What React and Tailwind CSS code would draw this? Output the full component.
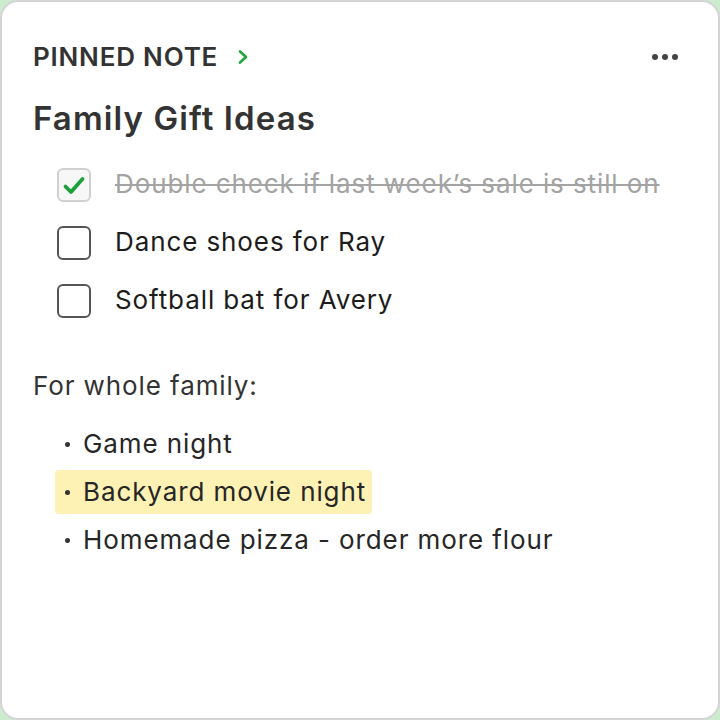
const checklist = [
  { text: "Double check if last week’s sale is still on", done: true },
  { text: "Dance shoes for Ray", done: false },
  { text: "Softball bat for Avery", done: false },
];

const bullets = [
  { text: "Game night" },
  { text: "Backyard movie night", highlight: true },
  { text: "Homemade pizza - order more flour" },
];

const Checkbox = ({ checked }) =>
  checked ? (
    <div className="w-[34px] h-[34px] rounded-[6px] border-2 border-[#d0d0d0] bg-[#f7f7f7] flex items-center justify-center shrink-0">
      <svg className="w-[24px] h-[24px]" viewBox="0 0 24 24" fill="none" stroke="#1d9f3a" strokeWidth={3.8} strokeLinecap="round" strokeLinejoin="round">
        <path d="M3.5 13.5l5.5 5.5L20.5 6" />
      </svg>
    </div>
  ) : (
    <div className="w-[34px] h-[34px] rounded-[6px] border-2 border-[#555555] bg-white shrink-0" />
  );

export default function App() {
  return (
    <div className="w-[720px] h-[720px] bg-[#cdeccd]" style={{ fontFamily: "Inter, 'Noto Sans', sans-serif" }}>
      <div className="w-full h-full rounded-[18px] border-2 border-[#d4d4d4] bg-white pl-[31px] pr-[40px] pt-[39px]">
        <div className="flex items-center justify-between h-[32px]">
          <div className="flex items-center gap-[19px]">
            <span className="text-[26px] leading-[32px] font-semibold tracking-[0.8px] text-[#333333]">PINNED NOTE</span>
            <svg className="w-[12px] h-[16px]" viewBox="0 0 12 16" fill="none" stroke="#1fa53d" strokeWidth={2.6} strokeLinecap="round" strokeLinejoin="round">
              <path d="M3 2.5l6 5.5-6 5.5" />
            </svg>
          </div>
          <div className="flex items-center gap-[4px]">
            <span className="w-[6px] h-[6px] rounded-full bg-[#444444]" />
            <span className="w-[6px] h-[6px] rounded-full bg-[#444444]" />
            <span className="w-[6px] h-[6px] rounded-full bg-[#444444]" />
          </div>
        </div>

        <h1 className="mt-[25px] text-[33px] leading-[40px] font-semibold tracking-[1.1px] text-[#333333]">Family Gift Ideas</h1>

        <div className="mt-[18px] pl-[24px]">
          {checklist.map((item, idx) => (
            <div key={idx} className="flex items-center gap-[24px] h-[58px]">
              <Checkbox checked={item.done} />
              <span
                className={
                  item.done
                    ? "pb-[4px] text-[26px] tracking-[0.9px] text-[#a3a3a3] line-through decoration-[2px] decoration-[#a3a3a3]"
                    : "pb-[3px] text-[26px] tracking-[0.9px] text-[#1c1c1c]"
                }
              >
                {item.text}
              </span>
            </div>
          ))}
        </div>

        <p className="mt-[36px] text-[26px] leading-[40px] tracking-[0.9px] text-[#333333]">For whole family:</p>

        <ul className="mt-[14px] pl-[22px]">
          {bullets.map((b, idx) => (
            <li key={idx} className="h-[48px] flex items-center">
              <span
                className={
                  b.highlight
                    ? "h-[44px] flex items-center pl-[10px] pr-[6px] rounded-[4px] bg-[#fdf1b4]"
                    : "h-[44px] flex items-center pl-[10px] pr-[6px]"
                }
              >
                <span className="w-[5px] h-[5px] rounded-full bg-[#333333]" />
                <span className="ml-[13px] pb-[2px] text-[26px] tracking-[0.9px] text-[#262626]">{b.text}</span>
              </span>
            </li>
          ))}
        </ul>
      </div>
    </div>
  );
}
